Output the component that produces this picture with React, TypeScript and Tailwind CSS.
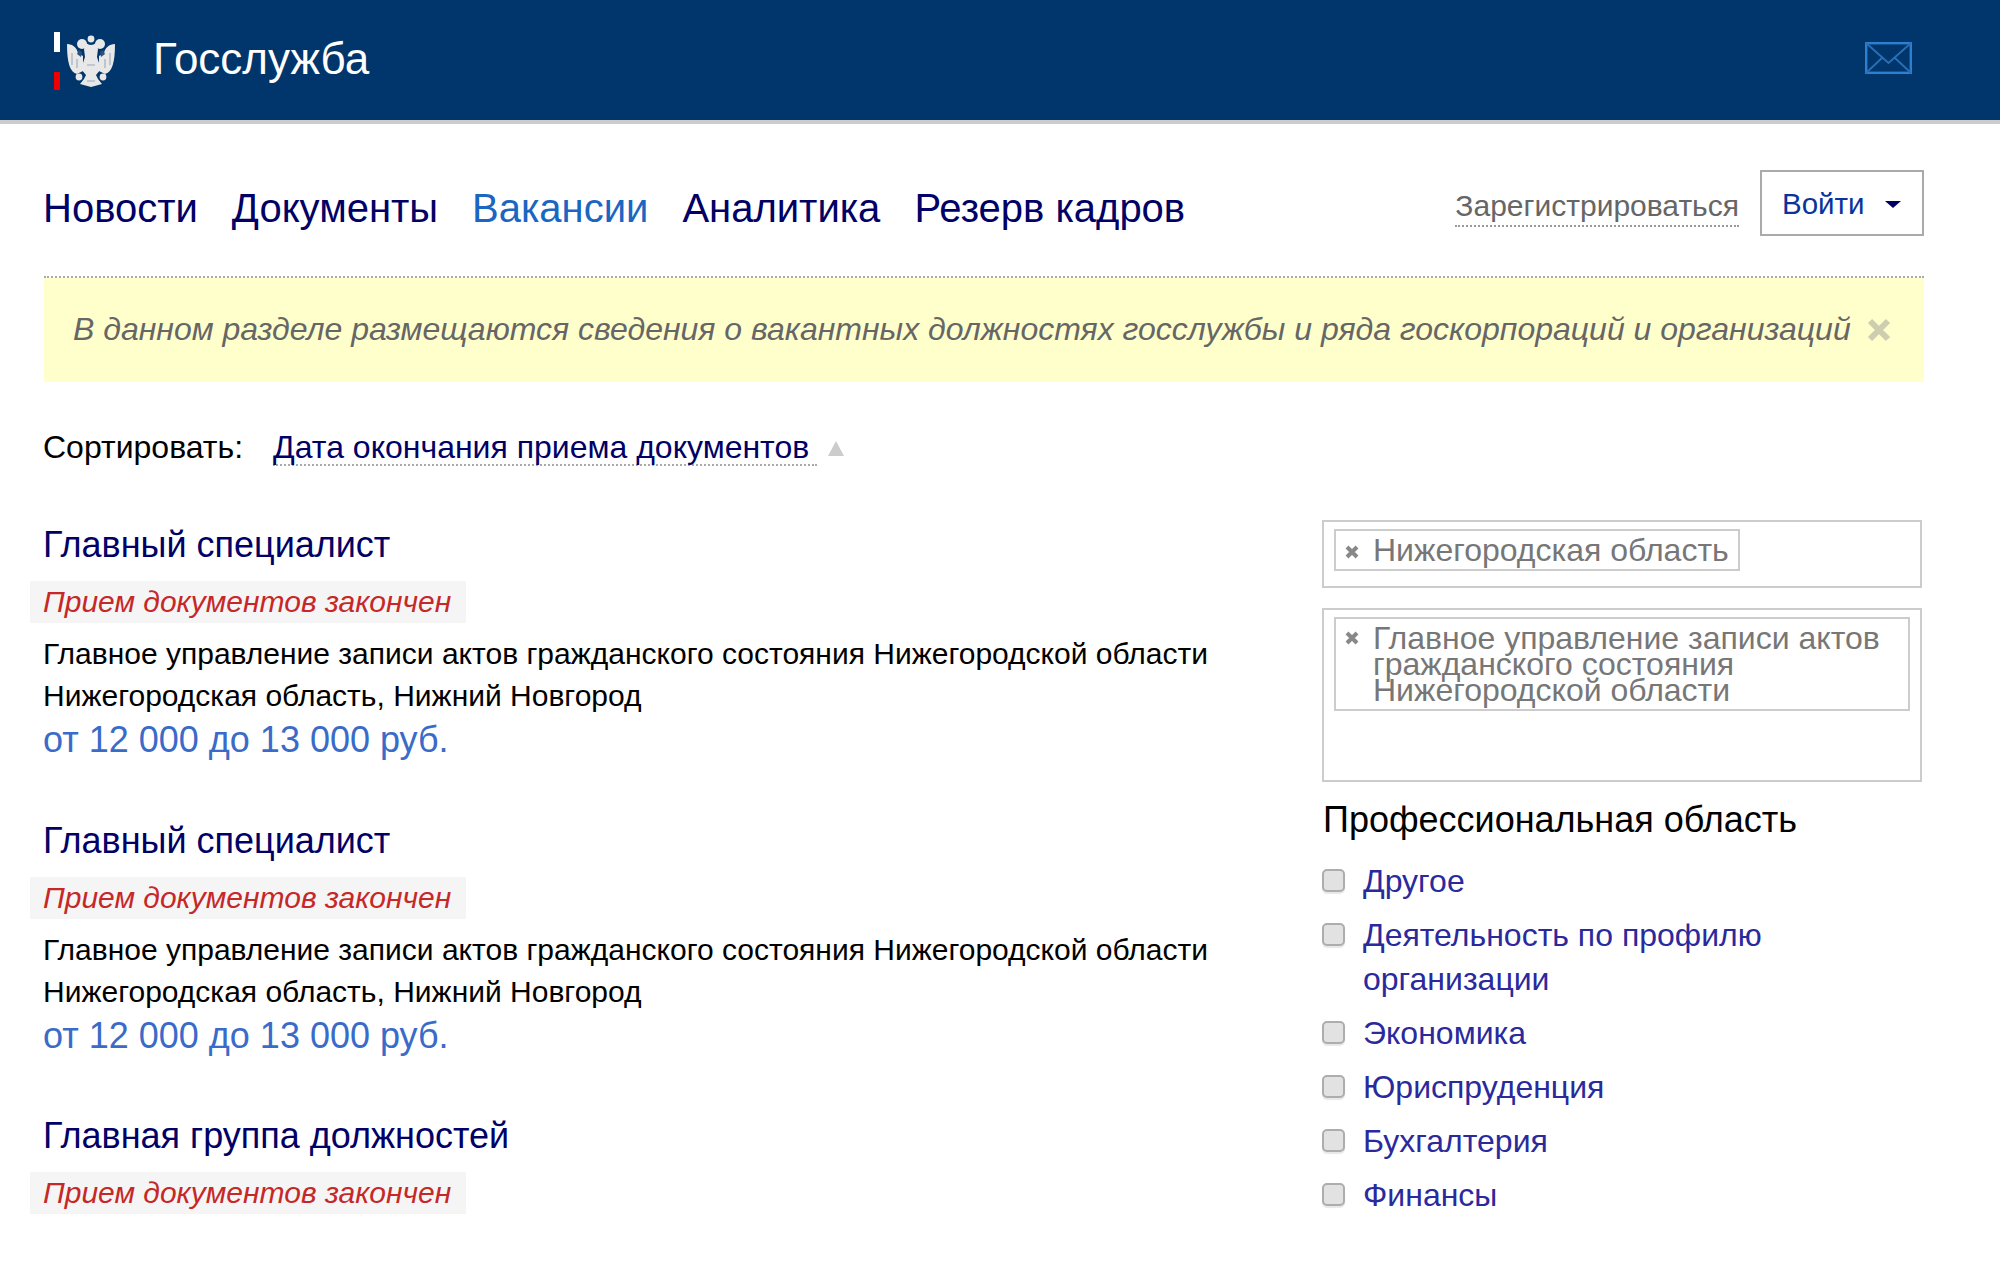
const F = "font-['Liberation_Sans',Arial,sans-serif]";

function Eagle() {
  return (
    <svg width="48" height="52" viewBox="0 0 48 52" className="ml-[7px] mt-[2px] blur-[0.7px]">
      <g fill="#e8e8e8">
        <circle cx="24" cy="4" r="3.4" />
        <circle cx="15" cy="9" r="5" />
        <circle cx="33" cy="9" r="5" />
        <path d="M0 9C6 9 10 13 11 18L16 21L16 36L10 39C3 37 0 28 0 9Z" />
        <path d="M48 9C42 9 38 13 37 18L32 21L32 36L38 39C45 37 48 28 48 9Z" />
        <path d="M19 8Q24 12 29 8L31 14L30 22L34 34L29 40L31 44L35 49L24 52L13 49L17 44L19 40L14 34L18 22L17 14Z" />
        <circle cx="12" cy="42" r="3.4" />
        <circle cx="36" cy="42" r="3.4" />
      </g>
      <g fill="none" stroke="#9aa8bb" strokeWidth="1.1">
        <path d="M5 18v12M10 24v9M43 18v12M38 24v9" />
        <path d="M20 30h8M20 46h8" />
      </g>
      <path d="M12 15l3 2-1 5-4-3zM36 15l-3 2 1 5 4-3z" fill="#2b527f" />
    </svg>
  );
}

function Badge() {
  return (
    <div className="ml-[-13px] mt-[16px] h-[42px] w-[436px] bg-[#f5f5f5] pl-[13px] text-[30px] italic leading-[42px] text-[#c62828]">
      Прием документов закончен
    </div>
  );
}

function Job({ title }: { title: string }) {
  return (
    <div>
      <h2 className="text-[36px] leading-[40px] text-[#000066]">{title}</h2>
      <Badge />
    </div>
  );
}

function FullJob({ title }: { title: string }) {
  return (
    <div>
      <h2 className="text-[36px] leading-[40px] text-[#000066]">{title}</h2>
      <Badge />
      <div className="mt-[10px] text-[30px] leading-[42px] text-black">
        <div>Главное управление записи актов гражданского состояния Нижегородской области</div>
        <div>Нижегородская область, Нижний Новгород</div>
      </div>
      <div className="mt-[1px] text-[36px] leading-[44px] text-[#3a6bc8]">от 12 000 до 13 000 руб.</div>
    </div>
  );
}

function Check({ label }: { label: string }) {
  return (
    <div className="mb-[10px] flex items-start">
      <span className="mt-[10px] h-[23px] w-[23px] shrink-0 rounded-[5px] border-2 border-[#adadad] bg-[#e2e2e2] shadow-[0_2px_1px_#e8e8e8]" />
      <span className="ml-[18px] w-[460px] text-[32px] leading-[44px] text-[#2a2a9c]">{label}</span>
    </div>
  );
}

function Tag() {
  return (
    <svg width="16" height="16" viewBox="0 0 16 16" className="ml-[8px] mr-[14px] mt-[4px] shrink-0">
      <path d="M3 3l10 10M13 3L3 13" stroke="#888888" strokeWidth="4" />
    </svg>
  );
}

export default function App() {
  return (
    <div className={`${F} h-[1266px] w-[2000px] overflow-hidden bg-white`}>
      <header className="flex h-[124px] items-center border-b-4 border-[#cccccc] bg-[#00366b] pl-[54px] pr-[88px]">
        <div className="mt-[2px] flex h-[58px] w-[6px] flex-col">
          <div className="h-[20px] bg-white" />
          <div className="h-[20px] bg-[#00366b]" />
          <div className="h-[18px] bg-[#ee0000]" />
        </div>
        <Eagle />
        <div className="-mt-[2px] ml-[38px] text-[44px] leading-[50px] text-white">Госслужба</div>
        <svg width="47" height="32" viewBox="0 0 47 32" className="-mt-[5px] ml-auto" fill="none" stroke="#2e7fd0" strokeWidth="2.4">
          <rect x="1.2" y="1.2" width="44.6" height="29.6" />
          <path d="M1 1l22.5 20L46 1M1 31l16-15M46 31L30 16" strokeWidth="1.8" stroke="#2a6fb5" />
        </svg>
      </header>

      <div className="pl-[44px] pr-[76px]">
        <div className="flex h-[154px] items-center justify-between border-b-2 border-dotted border-[#aaaaaa]">
          <nav className="-ml-px mt-[16px] flex gap-[34px] text-[40px] leading-[46px] text-[#000066]">
            <span>Новости</span>
            <span>Документы</span>
            <span className="text-[#1a66c2]">Вакансии</span>
            <span>Аналитика</span>
            <span>Резерв кадров</span>
          </nav>
          <div className="mt-[5px] flex items-center">
            <span className="mt-[8px] border-b-2 border-dotted border-[#999999] text-[30px] leading-[38px] text-[#666666]">Зарегистрироваться</span>
            <div className="ml-[21px] flex h-[66px] w-[164px] items-center border-2 border-[#aaaaaa] pl-[20px] text-[29.5px] text-[#0a349c]">
              <span className="mt-[3px]">Войти</span>
              <span className="ml-[20px] mt-[3px] h-0 w-0 border-x-[8px] border-t-[7px] border-x-transparent border-t-[#000066]" />
            </div>
          </div>
        </div>

        <div className="flex h-[104px] items-center bg-[#ffffcc] pl-[29px] text-[32px] italic text-[#666666]">
          <span className="-mt-[2px]">В данном разделе размещаются сведения о вакантных должностях госслужбы и ряда госкорпораций и организаций</span>
          <svg width="24" height="24" viewBox="0 0 24 24" className="ml-[16px]">
            <path d="M3 3l18 18M21 3L3 21" stroke="#cfcdb0" strokeWidth="6" />
          </svg>
        </div>

        <div className="-ml-px mt-[43px] flex h-[44px] items-center text-[32px] text-black">
          <span>Сортировать:</span>
          <span className="ml-[30px] border-b-2 border-dotted border-[#aaaaaa] pr-[8px] pt-[2px] leading-[34px] text-[#000066]">Дата окончания приема документов</span>
          <span className="ml-[11px] mt-[2px] h-0 w-0 border-x-[8px] border-b-[15px] border-x-transparent border-b-[#cccccc]" />
        </div>

        <div className="mt-[56px] flex">
          <div className="-ml-px w-[1279px] shrink-0">
            <FullJob title="Главный специалист" />
            <div className="mt-[59px]">
              <FullJob title="Главный специалист" />
            </div>
            <div className="mt-[58px]">
              <Job title="Главная группа должностей" />
            </div>
          </div>
          <div className="w-[600px] shrink-0">
            <div className="-mt-[5px] h-[68px] border-2 border-[#cccccc] p-[7px] pb-[8px] pl-[10px] pt-[7px]">
              <div className="flex h-[42px] w-[406px] items-center border-2 border-[#cccccc] text-[32px] text-[#777777]">
                <Tag />
                <span className="-ml-px -mt-[1px]">Нижегородская область</span>
              </div>
            </div>
            <div className="mt-[20px] h-[174px] border-2 border-[#cccccc] p-[7px] pl-[10px]">
              <div className="flex h-[94px] w-[576px] items-start border-2 border-[#cccccc] text-[32px] leading-[26px] text-[#777777]">
                <div className="mt-[7px]"><Tag /></div>
                <div className="-ml-px mt-[6px]">
                  Главное управление записи актов гражданского состояния Нижегородской области
                </div>
              </div>
            </div>
            <h3 className="mt-[18px] pl-[1px] text-[36px] leading-[40px] text-black">Профессиональная область</h3>
            <div className="mt-[19px]">
              <Check label="Другое" />
              <Check label="Деятельность по профилю организации" />
              <Check label="Экономика" />
              <Check label="Юриспруденция" />
              <Check label="Бухгалтерия" />
              <Check label="Финансы" />
            </div>
          </div>
        </div>
      </div>
    </div>
  );
}
